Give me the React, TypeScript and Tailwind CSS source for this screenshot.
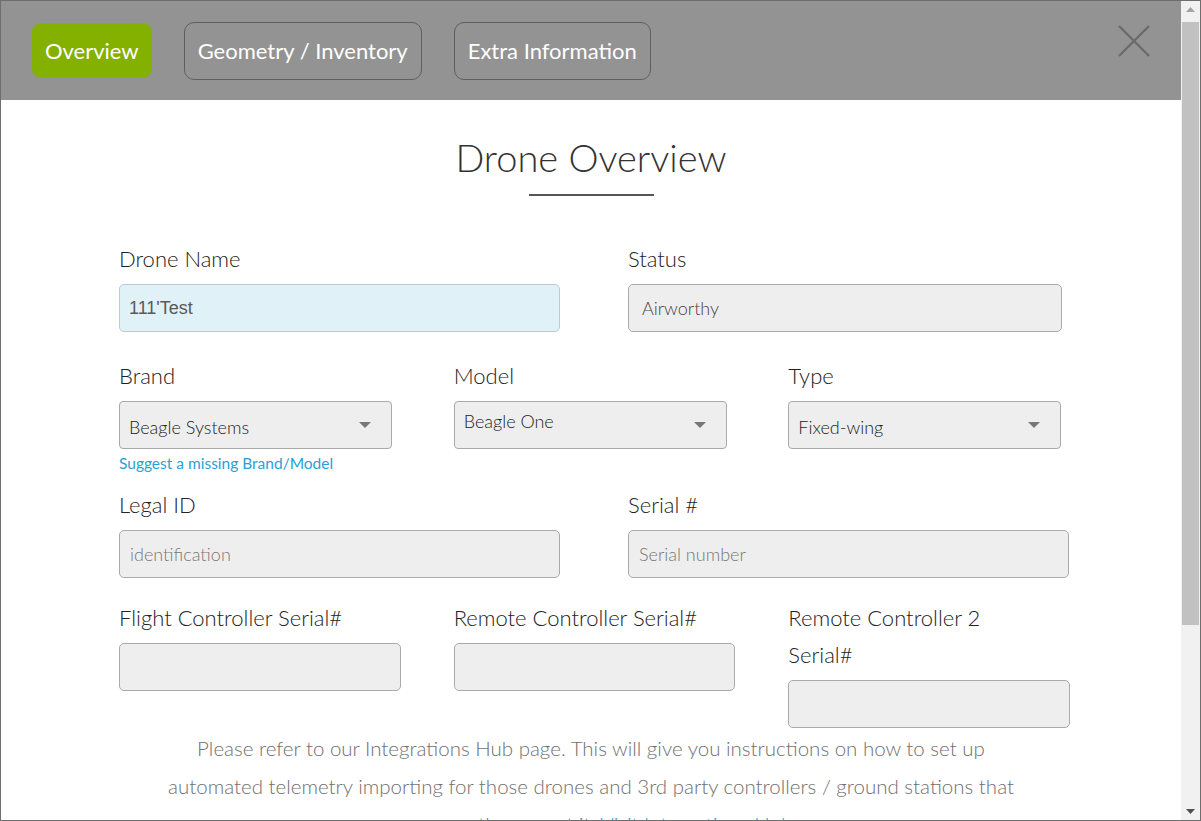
import React from "react";

const font = { fontFamily: "Lato, 'Noto Sans', sans-serif" };

const tabs = [
  { label: "Overview", active: true },
  { label: "Geometry / Inventory", active: false },
  { label: "Extra Information", active: false },
] as const;

function Caret() {
  return (
    <svg width="12" height="6" viewBox="0 0 12 6" className="shrink-0" aria-hidden>
      <path d="M0 0 L12 0 L6 6 Z" fill="#777" />
    </svg>
  );
}

function Label({ children }: { children: React.ReactNode }) {
  return <div className="mb-[7px] text-[22px] font-light leading-[37px] text-[#222]">{children}</div>;
}

function Field({
  value,
  placeholder,
  className = "",
}: {
  value?: string;
  placeholder?: string;
  className?: string;
}) {
  return (
    <div
      className={`flex h-[48px] items-center rounded-[5px] border border-[#aaa] bg-[#eee] px-[10px] text-[18px] font-light ${className}`}
    >
      {value ? (
        <span className="text-[#444]">{value}</span>
      ) : (
        <span className="text-[#777]">{placeholder}</span>
      )}
    </div>
  );
}

function Select({ value, raised = false }: { value: string; raised?: boolean }) {
  return (
    <div className="flex h-[48px] w-[273px] items-center justify-between rounded-[4px] border border-[#aaa] bg-[#eee] pl-[9px] pr-[20px] text-[18px] font-light text-[#222]">
      <span className={raised ? "-mt-[7px]" : "mt-[5px]"}>{value}</span>
      <Caret />
    </div>
  );
}

export default function App() {
  return (
    <div
      className="flex h-[821px] w-[1201px] overflow-hidden border border-[#6e6e6e] bg-white"
      style={font}
    >
      <div className="flex min-w-0 flex-1 flex-col">
        {/* header with tabs */}
        <div className="flex h-[99px] shrink-0 items-center bg-[#939393] pl-[31px] pr-[31px]">
          <div className="flex items-center gap-[32px]">
            {tabs.map((t) =>
              t.active ? (
                <div
                  key={t.label}
                  className="flex h-[55px] items-center rounded-[9px] bg-[#84b000] px-[13px] text-[22px] text-white"
                >
                  {t.label}
                </div>
              ) : (
                <div
                  key={t.label}
                  className="flex h-[58px] items-center rounded-[10px] border border-[#5f5f5f] px-[13px] text-[22px] text-white"
                >
                  {t.label}
                </div>
              )
            )}
          </div>
          <div className="ml-auto -mt-[19px]">
            <svg width="32" height="32" viewBox="0 0 32 32" aria-hidden>
              <path d="M1 1 L31 31 M31 1 L1 31" stroke="#6b6b6b" strokeWidth="2.4" />
            </svg>
          </div>
        </div>

        {/* body */}
        <div className="flex flex-col">
          <h1 className="mt-[33px] text-center text-[38px] font-light leading-[48px] text-[#333]">
            Drone Overview
          </h1>
          <div className="mx-auto mt-[13px] h-[2px] w-[125px] bg-[#555]" />

          <div className="ml-[118px] mt-[44px] w-[951px]">
            <div className="grid grid-cols-[441px_441px] gap-x-[68px]">
              <div>
                <Label>Drone Name</Label>
                <div
                  className="flex h-[48px] items-center rounded-[5px] border border-[#b9ccd3] bg-[#e0f2f8] px-[9px] text-[18px] text-[#5a5a5a]"
                  style={{ fontFamily: "'Liberation Sans', Arial, sans-serif" }}
                >
                  111'Test
                </div>
              </div>
              <div>
                <Label>Status</Label>
                <Field value="Airworthy" className="w-[434px] px-[13px]" />
              </div>
            </div>

            <div className="mt-[25px] grid grid-cols-3 gap-x-[53px]">
              <div>
                <Label>Brand</Label>
                <Select value="Beagle Systems" />
                <div className="mt-[3px] text-[15.5px] leading-[22px] text-[#2a9fd6]">
                  Suggest a missing Brand/Model
                </div>
              </div>
              <div>
                <Label>Model</Label>
                <Select value="Beagle One" raised />
              </div>
              <div>
                <Label>Type</Label>
                <Select value="Fixed-wing" />
              </div>
            </div>

            <div className="mt-[12px] grid grid-cols-[441px_441px] gap-x-[68px]">
              <div>
                <Label>Legal ID</Label>
                <Field placeholder="identification" />
              </div>
              <div>
                <Label>Serial #</Label>
                <Field placeholder="Serial number" />
              </div>
            </div>

            <div className="mt-[21px] grid grid-cols-3 gap-x-[53px]">
              <div>
                <Label>Flight Controller Serial#</Label>
                <Field />
              </div>
              <div>
                <Label>Remote Controller Serial#</Label>
                <Field />
              </div>
              <div>
                <Label>
                  <span className="block w-[230px]">Remote Controller 2 Serial#</span>
                </Label>
                <Field />
              </div>
            </div>
          </div>

          <p className="mx-auto mt-[1px] w-[866px] text-center text-[20.5px] font-light leading-[38px] text-[#6f6f6f]">
            Please refer to our Integrations Hub page. This will give you instructions on how to set up
            automated telemetry importing for those drones and 3rd party controllers / ground stations that
            we currently support it. <span className="text-[#2a9fd6]">Visit Integrations Hub</span>
          </p>
        </div>
      </div>

      {/* scrollbar */}
      <div className="flex w-[19px] shrink-0 flex-col bg-[#f1f1f1]">
        <div className="flex h-[17px] items-center justify-center">
          <svg width="9" height="5" viewBox="0 0 9 5" aria-hidden>
            <path d="M0 5 L9 5 L4.5 0 Z" fill="#a3a3a3" />
          </svg>
        </div>
        <div className="mx-[1px] mt-[4px] h-[603px] bg-[#c1c1c1]" />
        <div className="flex-1" />
        <div className="flex h-[17px] items-center justify-center">
          <svg width="9" height="5" viewBox="0 0 9 5" aria-hidden>
            <path d="M0 0 L9 0 L4.5 5 Z" fill="#505050" />
          </svg>
        </div>
      </div>
    </div>
  );
}
